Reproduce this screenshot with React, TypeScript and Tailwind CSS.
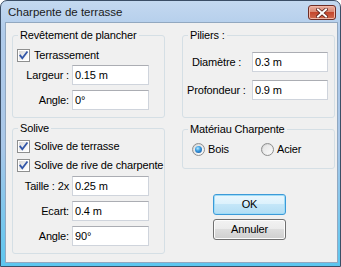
import React from "react";

const CheckBox = () => (
  <span className="flex h-[13px] w-[13px] shrink-0 border border-[#8e8f8f] bg-white p-[1px]">
    <span className="relative flex-1 bg-[linear-gradient(135deg,#d6d6d6,#f6f6f6_70%,#ffffff)]">
      <svg
        className="absolute left-[-1px] top-[-1px]"
        width="11"
        height="11"
        viewBox="0 0 11 11"
      >
        <path
          d="M2.3 5.6 L4.3 8.2 L8.9 2.2"
          fill="none"
          stroke="#3256a8"
          strokeWidth="1.8"
          strokeLinecap="square"
        />
      </svg>
    </span>
  </span>
);

const Radio = ({ checked }: { checked?: boolean }) => (
  <span className="flex h-[13px] w-[13px] shrink-0 items-center justify-center rounded-full border border-[#8e8f8f] bg-[linear-gradient(135deg,#cfcfcf,#fdfdfd)]">
    <span className="flex h-[9px] w-[9px] items-center justify-center rounded-full bg-[linear-gradient(135deg,#e4e4e4,#fafafa)]">
      {checked && (
        <span className="h-[7px] w-[7px] rounded-full bg-[radial-gradient(circle_at_40%_35%,#b8ecff_0%,#3b9be0_40%,#114a92_100%)]" />
      )}
    </span>
  </span>
);

const TextBox = ({ value, width }: { value: string; width: string }) => (
  <div
    className={`flex h-[20px] items-center border border-[#cfd4dc] border-t-[#abadb3] bg-white pl-[2px] ${width}`}
  >
    {value}
  </div>
);

const Group = ({
  title,
  className,
  children,
}: {
  title: string;
  className: string;
  children: React.ReactNode;
}) => (
  <fieldset className={`rounded-[3px] border border-[#d5dfe5] ${className}`}>
    <legend className="ml-[5px] px-[2px] leading-[13px]">{title}</legend>
    {children}
  </fieldset>
);

const LeftRow = ({ label, value, className }: { label: string; value: string; className: string }) => (
  <div className={`flex items-center ${className}`}>
    <span className="w-[56px] whitespace-nowrap text-right">{label}</span>
    <div className="ml-[3px]">
      <TextBox value={value} width="w-[77px]" />
    </div>
  </div>
);

export default function App() {
  return (
    <div className="h-[267px] w-[341px] overflow-hidden font-['Liberation_Sans',Arial,sans-serif] text-[11px] leading-[13px] tracking-[-0.15px] text-black">
      <div className="flex h-full w-full flex-col rounded-t-[7px] border border-[#3b4e66] bg-[linear-gradient(#c4d9f0,#b0cbea_12%,#a9c7e8_55%,#5cc6ef)]">
        {/* title bar */}
        <div className="flex h-[21px] shrink-0 items-start justify-between">
          <span className="pl-[7px] pt-[4px] text-[11.5px] leading-[14px] tracking-normal text-[#1a1a1a]">Charpente de terrasse</span>
          <div className="mr-[4px] mt-[4px] flex h-[15px] w-[28px] items-center justify-center rounded-[3px] border border-[#6e2d26] bg-[linear-gradient(#eab0a2,#d98772_45%,#c4462d_50%,#cf6a4f)] shadow-[inset_0_0_0_1px_#f2b8a8]">
            <svg width="12" height="10" viewBox="0 0 12 10">
              <path d="M2 1.5 L10 8.5 M10 1.5 L2 8.5" stroke="#5a1f1a" strokeWidth="3.6" strokeLinecap="square" />
              <path d="M2 1.5 L10 8.5 M10 1.5 L2 8.5" stroke="#ffffff" strokeWidth="2" strokeLinecap="square" />
            </svg>
          </div>
        </div>

        {/* client area */}
        <div className="ml-[4px] mr-[2px] flex h-[241px] shrink-0 border border-[#92a8c0] bg-[#f0f0f0] pl-[6px] pt-[6px]">
          {/* left column */}
          <div className="flex w-[153px] flex-col">
            <Group title="Revêtement de plancher" className="h-[89px]">
              <div className="flex items-center gap-[4px] pl-[4px] pt-[7px]">
                <CheckBox />
                <span>Terrassement</span>
              </div>
              <LeftRow label="Largeur :" value="0.15 m" className="mt-[3px]" />
              <LeftRow label="Angle:" value="0°" className="mt-[5px]" />
            </Group>

            <Group title="Solive" className="mt-[4px] h-[132px]">
              <div className="flex items-center gap-[4px] pl-[4px] pt-[5px]">
                <CheckBox />
                <span>Solive de terrasse</span>
              </div>
              <div className="mt-[6px] flex items-center gap-[4px] pl-[4px]">
                <CheckBox />
                <span className="whitespace-nowrap">Solive de rive de charpente</span>
              </div>
              <LeftRow label="Taille : 2x" value="0.25 m" className="mt-[4px]" />
              <LeftRow label="Ecart:" value="0.4 m" className="mt-[5px]" />
              <LeftRow label="Angle:" value="90°" className="mt-[5px]" />
            </Group>
          </div>

          {/* right column */}
          <div className="ml-[17px] flex w-[153px] flex-col">
            <Group title="Piliers :" className="h-[89px]">
              <div className="mt-[10px] flex items-center">
                <span className="w-[69px] pl-[9px]">Diamètre :</span>
                <TextBox value="0.3 m" width="w-[76px]" />
              </div>
              <div className="mt-[8px] flex items-center">
                <span className="w-[69px] whitespace-nowrap pl-[4px]">Profondeur :</span>
                <TextBox value="0.9 m" width="w-[76px]" />
              </div>
            </Group>

            <Group title="Matériau Charpente" className="mt-[5px] h-[46px]">
              <div className="mt-[7px] flex items-center pl-[9px]">
                <div className="flex w-[69px] items-center gap-[3px]">
                  <Radio checked />
                  <span>Bois</span>
                </div>
                <div className="flex items-center gap-[3px]">
                  <Radio />
                  <span>Acier</span>
                </div>
              </div>
            </Group>

            <div className="ml-[31px] mt-[25px] flex flex-col gap-[4px]">
              <button className="flex h-[21px] w-[73px] items-center justify-center rounded-[3px] border border-[#3c9ad8] bg-[linear-gradient(#eaf6fd,#dbf1fc_50%,#c4e6f8_50%,#b2ddf4)] shadow-[inset_0_0_0_1px_#9fdcf7]">
                OK
              </button>
              <button className="flex h-[21px] w-[73px] items-center justify-center rounded-[3px] border border-[#707070] bg-[linear-gradient(#f2f2f2,#ebebeb_50%,#dddddd_50%,#cfcfcf)] shadow-[inset_0_0_0_1px_#fcfcfc]">
                Annuler
              </button>
            </div>
          </div>
        </div>
      </div>
    </div>
  );
}
